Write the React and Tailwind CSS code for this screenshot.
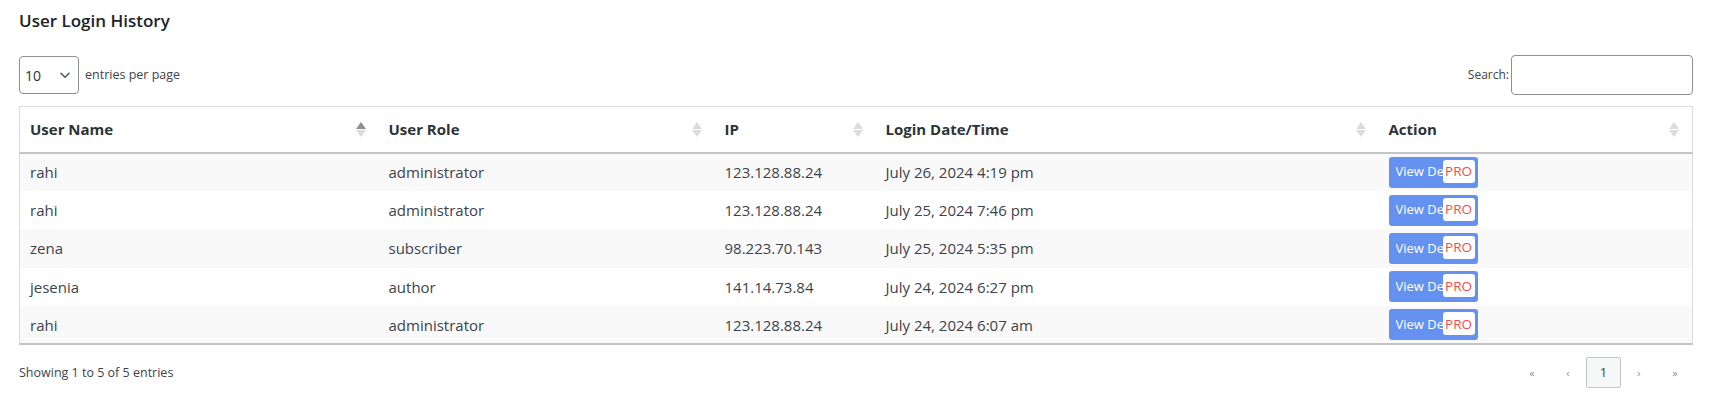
import React from 'react';

const rows = [
  { name: 'rahi', role: 'administrator', ip: '123.128.88.24', date: 'July 26, 2024 4:19 pm' },
  { name: 'rahi', role: 'administrator', ip: '123.128.88.24', date: 'July 25, 2024 7:46 pm' },
  { name: 'zena', role: 'subscriber', ip: '98.223.70.143', date: 'July 25, 2024 5:35 pm' },
  { name: 'jesenia', role: 'author', ip: '141.14.73.84', date: 'July 24, 2024 6:27 pm' },
  { name: 'rahi', role: 'administrator', ip: '123.128.88.24', date: 'July 24, 2024 6:07 am' },
];

const SortIcon = ({ active }) => (
  <span className="flex flex-col items-center gap-[1px]">
    <span className={`w-0 h-0 border-l-[5px] border-r-[5px] border-b-[7px] border-l-transparent border-r-transparent ${active ? 'border-b-[#8c8f94]' : 'border-b-[#dcdcde]'}`}></span>
    <span className="w-0 h-0 border-l-[5px] border-r-[5px] border-t-[7px] border-l-transparent border-r-transparent border-t-[#dcdcde]"></span>
  </span>
);

const Th = ({ label, width, active }) => (
  <th className={`${width} h-[46px] pl-[10px] pr-[13px] text-left font-bold text-[15px] text-[#2c3338]`}>
    <div className="flex items-center justify-between">
      <span>{label}</span>
      <SortIcon active={active} />
    </div>
  </th>
);

export default function App() {
  return (
    <div className="bg-white min-h-screen pl-[19px] pr-[16px] pt-[9px] text-[#3c434a]" style={{ fontFamily: '"Open Sans", "Noto Sans", sans-serif' }}>
      <h2 className="text-[17px] font-semibold text-[#1d2327] leading-[24px]">User Login History</h2>

      <div className="flex items-center justify-between mt-[22px]">
        <div className="flex items-center gap-[6px]">
          <div className="w-[60px] h-[38px] border border-[#8c8f94] rounded-[4px] flex items-center justify-between pl-[5px] pr-[6px] text-[14px] text-[#2c3338]">
            <span>10</span>
            <svg width="14" height="14" viewBox="0 0 24 24" fill="none" stroke="#50575e" strokeWidth="2.6" strokeLinecap="round" strokeLinejoin="round"><path d="M5 9l7 7 7-7" /></svg>
          </div>
          <span className="text-[12.5px] text-[#3c434a]">entries per page</span>
        </div>
        <div className="flex items-center gap-[2px]">
          <span className="text-[12px] text-[#3c434a]">Search:</span>
          <div className="w-[182px] h-[40px] border border-[#8c8f94] rounded-[4px]"></div>
        </div>
      </div>

      <table className="w-full mt-[11px] border border-[#dcdcde] border-collapse table-fixed">
        <thead>
          <tr className="border-b-2 border-[#c3c4c7]">
            <Th label="User Name" width="w-[359px]" active />
            <Th label="User Role" width="w-[336px]" />
            <Th label="IP" width="w-[161px]" />
            <Th label="Login Date/Time" width="w-[503px]" />
            <Th label="Action" width="w-auto" />
          </tr>
        </thead>
        <tbody className="border-b-2 border-[#c3c4c7]">
          {rows.map((r, i) => (
            <tr key={i} className={`h-[38.4px] text-[15px] ${i % 2 === 0 ? 'bg-[#f9f9f9]' : 'bg-white'}`}>
              <td className="pl-[10px]">{r.name}</td>
              <td className="pl-[10px]">{r.role}</td>
              <td className="pl-[10px]">{r.ip}</td>
              <td className="pl-[10px]">{r.date}</td>
              <td className="pl-[10px]">
                <div className="relative w-[89px] h-[31px] bg-[#6592f0] rounded-[3px] flex items-center pl-[7px] text-white text-[13px]">
                  <span className="w-[47px] overflow-hidden whitespace-nowrap">View Details</span>
                  <span className="absolute left-[54px] top-[3px] w-[32px] h-[23px] bg-white rounded-[3px] flex items-center justify-center text-[#f44b4b] text-[13.5px]">PRO</span>
                </div>
              </td>
            </tr>
          ))}
        </tbody>
      </table>

      <div className="flex items-center justify-between mt-[12px]">
        <span className="text-[12.5px] text-[#3c434a]">Showing 1 to 5 of 5 entries</span>
        <div className="flex items-center text-[11px] text-[#8c8f94]">
          <span className="w-[36px] text-center">«</span>
          <span className="w-[36px] text-center">‹</span>
          <span className="w-[35px] h-[31px] border border-[#c3c4c7] rounded-[2px] bg-[#f6f7f7] flex items-center justify-center text-[13px] text-[#3c434a]">1</span>
          <span className="w-[36px] text-center">›</span>
          <span className="w-[36px] text-center">»</span>
        </div>
      </div>
    </div>
  );
}
